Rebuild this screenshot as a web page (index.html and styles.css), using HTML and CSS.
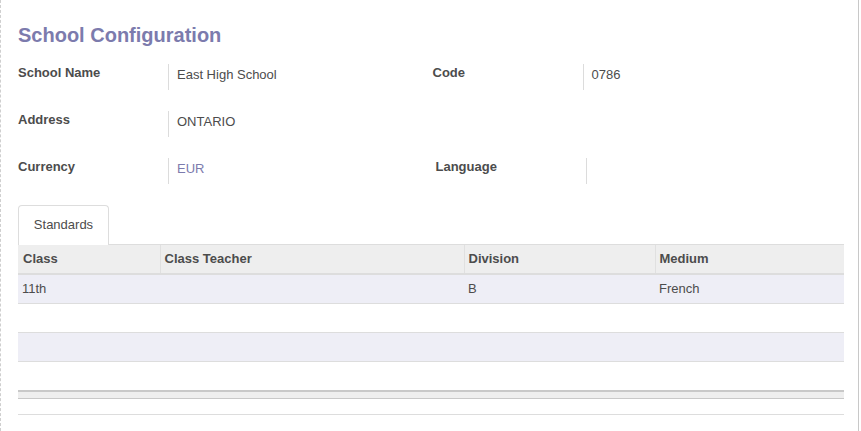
FILE: index.html
```html
<!DOCTYPE html>
<html>
<head>
<meta charset="utf-8">
<link rel="stylesheet" href="styles.css">
</head>
<body>
<div class="sheet">
  <h1 class="title">School Configuration</h1>
  <div class="groups">
    <div class="group">
      <div class="field"><div class="label">School Name</div><div class="value">East High School</div></div>
      <div class="field"><div class="label">Address</div><div class="value">ONTARIO</div></div>
      <div class="field"><div class="label">Currency</div><div class="value link">EUR</div></div>
    </div>
    <div class="group">
      <div class="field"><div class="label">Code</div><div class="value">0786</div></div>
      <div class="field empty"></div>
      <div class="field shifted"><div class="label">Language</div><div class="value"></div></div>
    </div>
  </div>
  <div class="tabs">
    <div class="tab">Standards</div>
  </div>
  <table class="grid">
    <colgroup>
      <col class="c1"><col class="c2"><col class="c3"><col class="c4">
    </colgroup>
    <thead>
      <tr><th>Class</th><th>Class Teacher</th><th>Division</th><th>Medium</th></tr>
    </thead>
    <tbody>
      <tr class="odd"><td>11th</td><td></td><td>B</td><td>French</td></tr>
      <tr><td></td><td></td><td></td><td></td></tr>
      <tr class="odd"><td></td><td></td><td></td><td></td></tr>
      <tr><td></td><td></td><td></td><td></td></tr>
    </tbody>
    <tfoot>
      <tr><td></td><td></td><td></td><td></td></tr>
    </tfoot>
  </table>
  <div class="endline"></div>
</div>
</body>
</html>
```
FILE: styles.css
```css
html, body {
  margin: 0;
  padding: 0;
  background: #ffffff;
}
body {
  font-family: "Liberation Sans", Arial, sans-serif;
  font-size: 13px;
  color: #4c4c4c;
}
.sheet {
  box-sizing: border-box;
  width: 859px;
  height: 431px;
  border-left: 1px dashed #cfcfcf;
  border-right: 1px solid #c8c8c8;
  padding: 23px 14px 0 17px;
  overflow: hidden;
}
.title {
  margin: 0;
  font-size: 20px;
  line-height: 24px;
  font-weight: bold;
  color: #7c7bad;
}
.groups {
  display: flex;
  margin-top: 17px;
}
.group {
  width: 415px;
  display: flex;
  flex-direction: column;
  gap: 21px;
}
.group + .group {
  margin-left: 3px;
}
.field {
  display: flex;
  height: 26px;
}
.field.shifted {
  margin-left: 3px;
}
.label {
  width: 150px;
  font-weight: bold;
  line-height: 16px;
  padding-top: 1px;
}
.value {
  border-left: 1px solid #dcdcdc;
  padding: 3px 0 0 8px;
  line-height: 16px;
}
.value.link {
  color: #7c7bad;
}
.tabs {
  display: flex;
  margin-top: 21px;
  height: 39px;
}
.tab {
  box-sizing: border-box;
  width: 91px;
  height: 40px;
  border: 1px solid #dddddd;
  border-bottom: none;
  border-radius: 4px 4px 0 0;
  text-align: center;
  line-height: 38px;
  background: #fff;
}
.grid {
  width: 826px;
  border-collapse: collapse;
  table-layout: fixed;
}
.c1 { width: 142px; }
.c2 { width: 304px; }
.c3 { width: 191px; }
.c4 { width: 189px; }
.grid th {
  background: #eeeeee;
  text-align: left;
  font-weight: bold;
  height: 27px;
  padding: 0 5px 1px 5px;
  border-top: 1px solid #dddddd;
  border-bottom: 2px solid #dddddd;
  border-left: 1px solid #e0e0e0;
}
.grid th:first-child { border-left: none; }
.grid th + th { padding-left: 4px; }
.grid tbody td {
  height: 26px;
  padding: 0 4px 2px 4px;
  border-bottom: 1px solid #dddddd;
}
.grid tbody tr.odd td {
  background: #eeeef6;
}
.grid tfoot td {
  height: 6px;
  padding: 0;
  background: #eeeeee;
  border-top: 2px solid #c8c8c8;
  border-bottom: 1px solid #c8c8c8;
}
.endline {
  width: 826px;
  height: 15px;
  border-bottom: 1px solid #dddddd;
}
```
